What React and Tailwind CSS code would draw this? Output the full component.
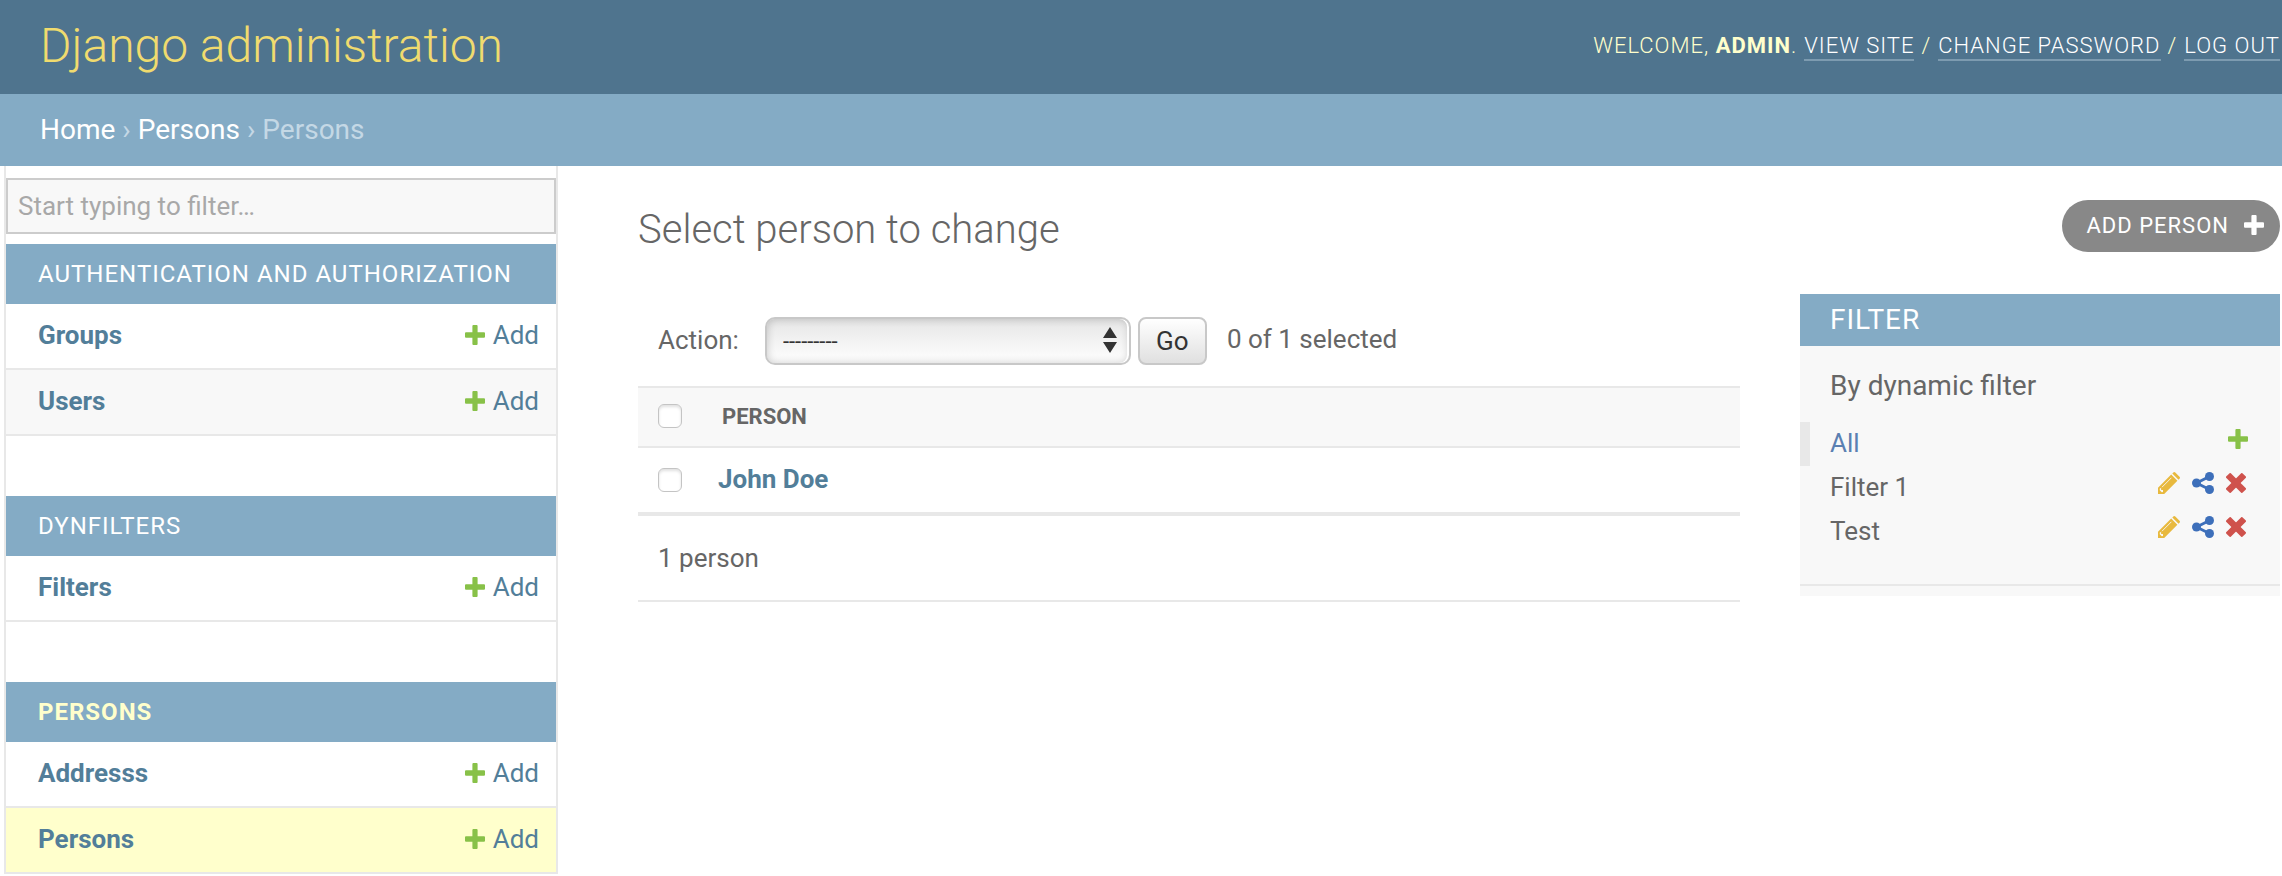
import React from "react";

const sections = [
  { title: "Authentication and Authorization", models: [{ name: "Groups" }, { name: "Users", striped: true }] },
  { title: "Dynfilters", models: [{ name: "Filters" }] },
  { title: "Persons", current: true, models: [{ name: "Addresss" }, { name: "Persons", current: true }] },
];

const savedFilters = ["Filter 1", "Test"];

function PlusIcon({ className }) {
  return (
    <svg viewBox="0 0 20 20" className={className} fill="currentColor" aria-hidden="true">
      <path d="M8.400 0h3.200q1 0 1 1v6.200H19q1 0 1 1v3.600q0 1-1 1h-6.400V19q0 1-1 1H8.400q-1 0-1-1v-6.200H1q-1 0-1-1V8.200q0-1 1-1h6.400V1q0-1 1-1z" />
    </svg>
  );
}

function CrossIcon({ className }) {
  return (
    <svg viewBox="0 0 20 20" className={className} fill="currentColor" aria-hidden="true">
      <g transform="rotate(45 10 10)">
        <rect x="-1.500" y="6.700" width="23" height="6.600" rx="1.200" />
        <rect x="6.700" y="-1.500" width="6.600" height="23" rx="1.200" />
      </g>
    </svg>
  );
}

function PencilIcon({ className }) {
  return (
    <svg viewBox="0 0 22 22" className={className} aria-hidden="true">
      <path fill="currentColor" d="M0 22v-6.200L13.200 2.600l6.200 6.200L6.200 22zM14.300 1.500l1-1q1-1 2 0l4.200 4.200q1 1 0 2l-1 1z" />
      <path d="M4 15.200L13.400 5.800" stroke="#f8f8f8" strokeWidth="0.900" />
      <path fill="#f8f8f8" d="M1.800 16.600l1.300-.5v1.900h1.900v1.900l-1.200.4-2-2z" />
    </svg>
  );
}

function ShareIcon({ className }) {
  return (
    <svg viewBox="0 0 22 22" className={className} aria-hidden="true">
      <path d="M17.500 4.500L4.500 11l13 6.500" fill="none" stroke="currentColor" strokeWidth="2.800" />
      <circle cx="17.500" cy="4.500" r="4.500" fill="currentColor" />
      <circle cx="4.500" cy="11" r="4.500" fill="currentColor" />
      <circle cx="17.500" cy="17.500" r="4.500" fill="currentColor" />
    </svg>
  );
}

function Header() {
  const link = "border-b-2 border-[#7d9bb0] text-white";
  return (
    <header className="flex h-[94px] items-center justify-between bg-[#4f748e] pr-0.5 pb-0.5 pl-10">
      <h1 className="text-5xl font-light text-[#f0db6e]">
        <a href="#home">Django administration</a>
      </h1>
      <nav className="flex gap-[7px] pt-0.5 text-[22px] leading-[26px] font-light tracking-[1px] text-[#ffffcc] uppercase">
        <span>
          Welcome, <strong className="font-bold">admin</strong>.
        </span>
        <a href="#site" className={link}>View site</a>
        <span>/</span>
        <a href="#password" className={link}>Change password</a>
        <span>/</span>
        <a href="#logout" className={link}>Log out</a>
      </nav>
    </header>
  );
}

function Breadcrumbs() {
  return (
    <nav aria-label="Breadcrumbs" className="flex h-[72px] items-center gap-[7px] bg-[#84abc5] pl-10 text-[28px] text-[#c4d8e5]">
      <a href="#home" className="text-white">Home</a>
      <span>›</span>
      <a href="#app" className="text-white">Persons</a>
      <span>›</span>
      <span>Persons</span>
    </nav>
  );
}

function Sidebar() {
  return (
    <aside className="ml-1 w-[554px] shrink-0 border-x-2 border-[#e8e8e8] pt-3">
      <input
        type="search"
        aria-label="Filter navigation items"
        placeholder="Start typing to filter…"
        className="mb-2.5 block h-14 w-full border-2 border-[#cccccc] bg-[#f8f8f8] px-2.5 text-[26px] outline-none placeholder:text-[#a8a8a8]"
      />
      <div className="flex flex-col gap-[60px]">
        {sections.map((s) => (
          <table key={s.title} className="w-full border-separate border-spacing-0 text-[26px] text-[#527e99]">
            <caption className="h-[60px] bg-[#84abc5] pl-8 text-left text-2xl leading-[60px] tracking-[1px] uppercase">
              <a href="#section" className={s.current ? "font-bold text-[#ffffcc]" : "text-white"}>{s.title}</a>
            </caption>
            <tbody>
              {s.models.map((m) => (
                <tr key={m.name} className={m.current ? "bg-[#ffffcc]" : m.striped ? "bg-[#f8f8f8]" : "bg-white"}>
                  <th scope="row" className="h-[66px] border-b-2 border-[#e8e8e8] pb-0.5 pl-8 text-left font-bold">
                    <a href="#model">{m.name}</a>
                  </th>
                  <td className="h-[66px] border-b-2 border-[#e8e8e8] pr-[17px] pb-0.5">
                    <a href="#add" className="flex items-center justify-end gap-2">
                      <PlusIcon className="size-5 text-[#88c148]" />
                      Add
                    </a>
                  </td>
                </tr>
              ))}
            </tbody>
          </table>
        ))}
      </div>
    </aside>
  );
}

function Checkbox({ label }) {
  return (
    <input
      type="checkbox"
      aria-label={label}
      className="block size-6 appearance-none rounded-md border border-[#c4c4c4] bg-white shadow-[inset_0_2px_3px_rgba(0,0,0,0.12)]"
    />
  );
}

function Results() {
  return (
    <form className="min-w-0 flex-1 pt-[23px] text-[26px] text-[#666666]" onSubmit={(e) => e.preventDefault()}>
      <div className="flex h-[69px] items-start pl-5">
        <label htmlFor="action" className="mr-[26px] leading-[46px]">Action:</label>
        <div className="relative mr-[7px]">
          <select
            id="action"
            className="h-12 w-[366px] appearance-none rounded-[10px] border-2 border-[#c8c8c8] bg-linear-to-b from-[#e6e6e6] to-white pl-4 text-[22px] text-[#333333] shadow-[inset_-2px_0_0_#ffffff,inset_0_0_9px_rgba(0,0,0,0.2)]"
          >
            <option>---------</option>
          </select>
          <svg viewBox="0 0 12 26" className="pointer-events-none absolute top-[10px] right-3.5 h-[26px] w-3.5" fill="#333333" preserveAspectRatio="none" aria-hidden="true">
            <path d="M6 0l6 11H0zM6 26l6-11H0z" />
          </svg>
        </div>
        <button type="submit" className="mr-5 h-12 w-[69px] rounded-lg border-2 border-[#c8c8c8] bg-linear-to-b from-white to-[#e0e0e0] text-[#333333]">
          Go
        </button>
        <span className="leading-[44px]">0 of 1 selected</span>
      </div>
      <table className="w-full border-separate border-spacing-0 text-left">
        <thead>
          <tr className="bg-[#f8f8f8]">
            <th className="h-[62px] w-[72px] border-y-2 border-[#e8e8e8] pb-0.5 pl-5"><Checkbox label="Select all" /></th>
            <th className="border-y-2 border-[#e8e8e8] pb-0.5 pl-3 text-[22px] font-bold uppercase">Person</th>
          </tr>
        </thead>
        <tbody>
          <tr>
            <td className="h-[68px] border-b-4 border-[#e8e8e8] pl-5"><Checkbox label="Select John Doe" /></td>
            <th scope="row" className="border-b-4 border-[#e8e8e8] pb-0.5 pl-2 font-bold text-[#527e99]"><a href="#john">John Doe</a></th>
          </tr>
        </tbody>
      </table>
      <p className="border-b-2 border-[#e8e8e8] py-[22px] pl-5 leading-10">1 person</p>
    </form>
  );
}

function FilterPanel() {
  return (
    <aside className="w-[480px] shrink-0 self-start bg-[#f8f8f8] pb-2.5 text-[26px] text-[#666666]">
      <h2 className="bg-[#84abc5] pl-[30px] text-[28px] leading-[52px] tracking-[1px] text-white uppercase">Filter</h2>
      <h3 className="pt-5 pb-4 pl-[30px] text-[28px] leading-10">By dynamic filter</h3>
      <ul className="border-b-2 border-[#e8e8e8] pb-[30px]">
        <li className="flex h-11 items-center justify-between border-l-[10px] border-[#e8e8e8] pr-8 pb-0.5 pl-5">
          <a href="#all" className="text-[#5b80b2]">All</a>
          <a href="#new" aria-label="Add filter" className="pb-2"><PlusIcon className="size-5 text-[#88c148]" /></a>
        </li>
        {savedFilters.map((name) => (
          <li key={name} className="flex h-11 items-center justify-between pr-[34px] pb-0.5 pl-[30px]">
            <a href="#filter">{name}</a>
            <span className="flex items-center gap-3 pb-2">
              <a href="#edit" aria-label="Edit"><PencilIcon className="size-[22px] text-[#e8b93e]" /></a>
              <a href="#share" aria-label="Share"><ShareIcon className="size-[22px] text-[#3d6fba]" /></a>
              <a href="#delete" aria-label="Delete"><CrossIcon className="size-5 text-[#cf524c]" /></a>
            </span>
          </li>
        ))}
      </ul>
    </aside>
  );
}

export default function App() {
  return (
    <div className="min-h-screen bg-white font-[Roboto,sans-serif]">
      <Header />
      <Breadcrumbs />
      <div className="flex">
        <Sidebar />
        <main className="min-w-0 flex-1 pt-[34px] pr-0.5 pl-20">
          <div className="flex h-[94px] items-start justify-between">
            <h2 className="text-[40px] leading-[60px] font-light text-[#666666]">Select person to change</h2>
            <a href="#add-person" className="flex h-[52px] items-center gap-[15px] rounded-[30px] bg-[#888888] pr-4 pb-0.5 pl-6 text-[22px] tracking-[1px] text-white uppercase">
              Add person
              <PlusIcon className="size-5" />
            </a>
          </div>
          <div className="flex gap-[60px]">
            <Results />
            <FilterPanel />
          </div>
        </main>
      </div>
    </div>
  );
}
